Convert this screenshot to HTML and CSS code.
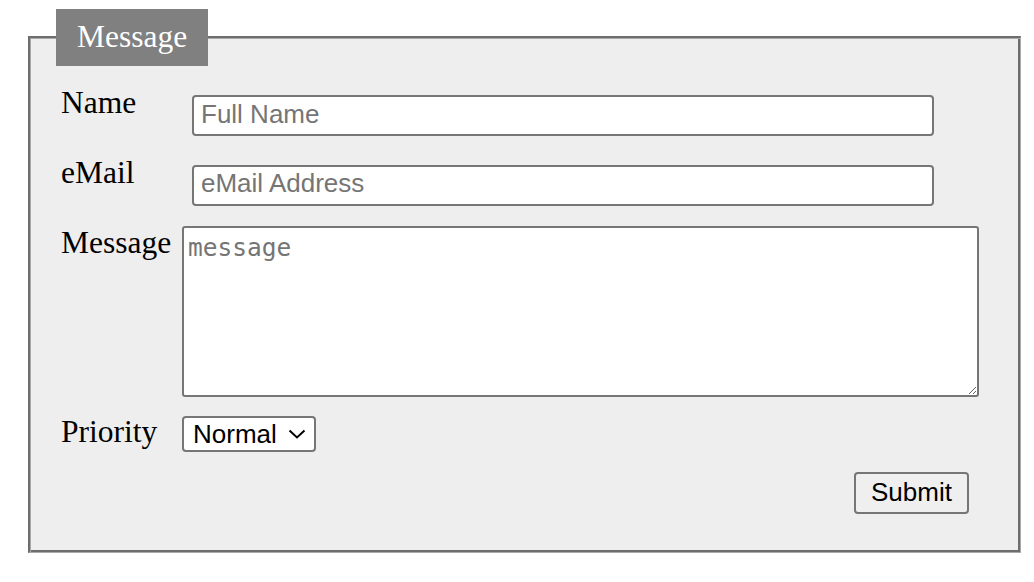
FILE: index.html
```html
<!DOCTYPE html>
<html lang="en">
<head>
<meta charset="utf-8">
<title>Message</title>
<link rel="stylesheet" href="styles.css">
</head>
<body>
<form class="form">
  <fieldset class="box">
    <legend class="box-title">Message</legend>
    <div class="row row-name">
      <label class="label" for="name">Name</label>
      <input class="text-input" id="name" type="text" placeholder="Full Name">
    </div>
    <div class="row row-email">
      <label class="label" for="email">eMail</label>
      <input class="text-input" id="email" type="email" placeholder="eMail Address">
    </div>
    <div class="row row-message">
      <label class="label" for="msg">Message</label>
      <textarea class="text-area" id="msg" placeholder="message"></textarea>
    </div>
    <div class="row row-priority">
      <label class="label" for="prio">Priority</label>
      <span class="select-wrap">
        <select class="select" id="prio">
          <option>Normal</option>
          <option>High</option>
          <option>Low</option>
        </select>
        <svg class="chevron" width="18" height="10" viewBox="0 0 18 10" aria-hidden="true"><polyline points="1.5,1.5 9,8.5 16.5,1.5" fill="none" stroke="#000" stroke-width="2"/></svg>
      </span>
    </div>
    <div class="actions">
      <button class="submit" type="button">Submit</button>
    </div>
  </fieldset>
</form>
</body>
</html>
```

FILE: styles.css
```css
html, body {
  margin: 0;
  padding: 0;
  background: #ffffff;
}

.form {
  margin: 0;
  padding: 9px 13px 0 28px;
}

.box {
  margin: 0;
  padding: 19px 32px 38.5px 31px;
  border-style: solid;
  border-width: 2px 1px 1px 2px;
  border-color: #6d6d6d #a9a9a9 #a9a9a9 #6d6d6d;
  box-shadow: inset 1px 1px 0 #a9a9a9, inset -2px -2px 0 #6d6d6d;
  background: #eeeeee;
  min-width: 0;
}

.box-title {
  margin-left: -5px;
  padding: 10px 21px;
  background: #808080;
  color: #ffffff;
  font-family: "Liberation Serif", "Times New Roman", serif;
  font-size: 31.5px;
  line-height: 36.5px;
}

.row {
  display: flex;
  align-items: flex-start;
}

.label {
  flex: 0 0 121px;
  width: 121px;
  padding-top: 0.5px;
  font-family: "Liberation Serif", "Times New Roman", serif;
  font-size: 31.5px;
  line-height: 36px;
  color: #000000;
}

.row-email {
  margin-top: 18px;
}

.row-message {
  margin-top: 19px;
}

.row-priority {
  margin-top: 16px;
}

.text-input {
  box-sizing: border-box;
  margin: 10.5px 0 0 10px;
  width: 742px;
  height: 41px;
  padding: 0 7px 2.5px 7px;
  border: 2px solid #767676;
  border-radius: 4px;
  background: #ffffff;
  font-family: "Liberation Sans", Arial, sans-serif;
  font-size: 26px;
  color: #000000;
}

.text-input::placeholder,
.text-area::placeholder {
  color: #757575;
  opacity: 1;
}

.text-area {
  box-sizing: border-box;
  margin: 1.5px 0 0 0;
  width: 797px;
  height: 171px;
  padding: 5px 4px 3px 4px;
  border: 2px solid #767676;
  border-radius: 3px;
  background: #ffffff;
  font-family: "DejaVu Sans Mono", "Liberation Mono", monospace;
  font-size: 24.5px;
  color: #000000;
}

.select-wrap {
  position: relative;
  display: inline-block;
  margin-top: 3px;
}

.select {
  appearance: none;
  -webkit-appearance: none;
  box-sizing: border-box;
  display: block;
  width: 134px;
  height: 36px;
  margin: 0;
  padding: 0 30px 0 9px;
  border: 2px solid #767676;
  border-radius: 4px;
  background: #ffffff;
  font-family: "Liberation Sans", Arial, sans-serif;
  font-size: 26px;
  color: #000000;
}

.chevron {
  position: absolute;
  right: 10px;
  top: 13px;
  pointer-events: none;
}

.actions {
  display: flex;
  justify-content: flex-end;
  margin-top: 19.5px;
  padding-right: 19px;
}

.submit {
  box-sizing: border-box;
  width: 115px;
  height: 42px;
  padding: 0;
  border: 2px solid #767676;
  border-radius: 4px;
  background: #efefef;
  font-family: "Liberation Sans", Arial, sans-serif;
  font-size: 26px;
  color: #000000;
}
```
